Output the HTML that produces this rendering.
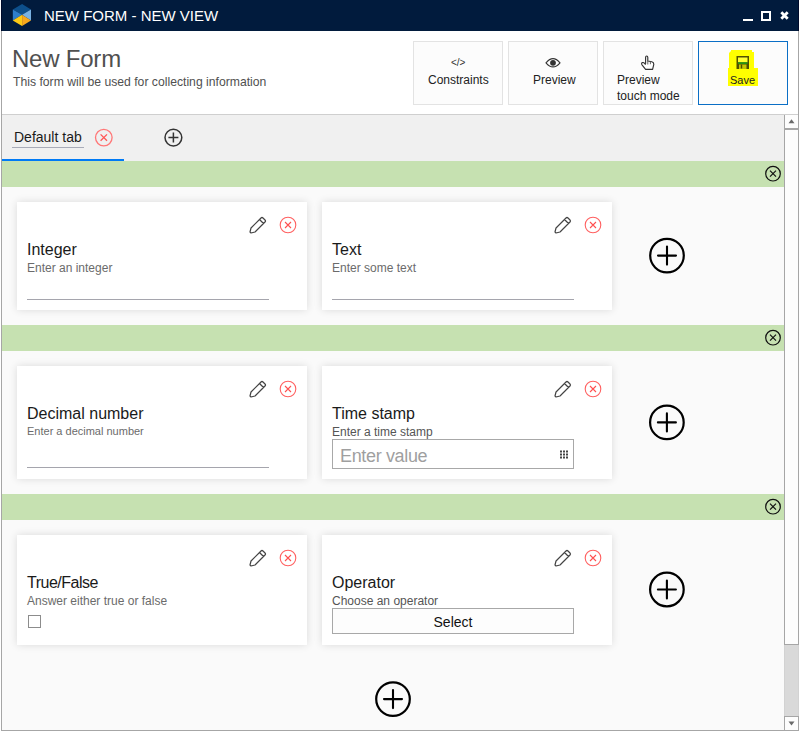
<!DOCTYPE html>
<html><head><meta charset="utf-8">
<style>
*{box-sizing:border-box;margin:0;padding:0}
html,body{width:800px;height:732px;overflow:hidden;background:#fff;font-family:"Liberation Sans",sans-serif}
.abs{position:absolute}
#title{left:1px;top:0;width:798px;height:31px;background:#011b3d;border-left:1px solid #000a2a;border-right:1px solid #000a2a}
#win{left:1px;top:31px;width:798px;height:700px;border:1px solid #a6a6a6;border-top:none;background:#fafafa}
#header{left:2px;top:31px;width:796px;height:83px;background:#fff}
#hline{left:2px;top:114px;width:796px;height:1px;background:#cfcfcf}
#tabs{left:2px;top:115px;width:782px;height:46px;background:#f0f0f0}
.band{left:2px;width:782px;height:26px;background:#c6e1b1}
.btn{top:41px;width:90px;height:64px;background:#fcfcfc;border:1px solid #e3e3e3}
.btxt{font-size:12px;color:#222;white-space:nowrap;line-height:16px}
.card{background:#fff;box-shadow:0 0 8px rgba(0,0,0,0.13)}
.t16{font-size:16px;color:#1a1a1a;white-space:nowrap;line-height:1}
.t11{font-size:12px;color:#6b6b6b;white-space:nowrap;line-height:1}
.uline{height:1px;background:#a5a5ad}
svg{position:absolute;overflow:visible}
</style></head><body>
<div id="title" class="abs"></div>
<!-- logo -->
<svg style="left:0;top:0" width="40" height="31">
  <polygon points="22.1,4 31,9.5 22.1,14.8 12.8,9.5" fill="#0d4f8b"/>
  <polygon points="12.8,9.5 22.1,14.8 12.8,20.6" fill="#2e7ecb"/>
  <polygon points="31,9.5 31,20.6 22.1,14.8" fill="#78b1e1"/>
  <polygon points="12.8,20.6 22.1,14.8 22.1,26" fill="#fcc914"/>
  <polygon points="22.1,14.8 31,20.6 22.1,26" fill="#f7a81c"/>
</svg>
<div class="abs" style="left:44px;top:7px;font-size:15px;color:#fff;white-space:nowrap;line-height:17px">NEW FORM - NEW VIEW</div>
<!-- window controls -->
<div class="abs" style="left:743px;top:19px;width:10px;height:2px;background:#fff"></div>
<div class="abs" style="left:761px;top:11px;width:10px;height:10px;border:2px solid #fff"></div>
<svg style="left:0;top:0" width="800" height="31">
  <path d="M781.3,12.3 L787.7,18.7 M787.7,12.3 L781.3,18.7" stroke="#fff" stroke-width="2.8" stroke-linecap="butt"/>
</svg>

<div id="win" class="abs"></div>
<div id="header" class="abs"></div>
<div id="hline" class="abs"></div>
<div class="abs" style="left:12px;top:46px;font-size:24px;letter-spacing:-0.22px;color:#505050;white-space:nowrap;line-height:26px">New Form</div>
<div class="abs" style="left:13px;top:75px;font-size:12.2px;color:#505050;white-space:nowrap;line-height:14px">This form will be used for collecting information</div>

<!-- buttons -->
<div class="abs btn" style="left:413px"></div>
<div class="abs btn" style="left:508px"></div>
<div class="abs btn" style="left:603px"></div>
<div class="abs btn" style="left:698px;border:1.5px solid #0b6fc6"></div>
<div class="abs" style="left:451px;top:57px;font-size:10px;color:#333;line-height:12px">&lt;/&gt;</div>
<div class="abs btxt" style="left:428px;top:72px">Constraints</div>
<svg style="left:0;top:0" width="800" height="120">
  <path d="M546,62.8 Q553,54.5 560,62.8 Q553,71 546,62.8 Z" fill="none" stroke="#333" stroke-width="1.1"/>
  <circle cx="553" cy="62.8" r="2.9" fill="#333"/>
</svg>
<div class="abs btxt" style="left:533px;top:72px">Preview</div>
<svg style="left:0;top:0" width="800" height="120">
  <path d="M645.6,63.8 L645.6,57.4 Q645.6,56 646.7,56 Q647.8,56 647.8,57.4 L647.8,61 L651.8,61.8 Q653.8,62.3 653.8,64.3 L652.6,69.3 L645.6,69.3 L642,64.8 Q641,63.3 642.4,62.6 Q643.6,62.2 644.6,63.4 L645.6,64.6" fill="#fff" stroke="#333" stroke-width="1.15" stroke-linejoin="round"/>
  <path d="M647.8,61 L647.8,64.5 M650.4,61.5 L650.4,64.2" stroke="#555" stroke-width="0.9"/>
</svg>
<div class="abs btxt" style="left:617px;top:72px">Preview<br>touch mode</div>
<!-- save highlight -->
<svg style="left:0;top:0" width="800" height="120">
  <path d="M731,50 L752,50 L752,52 L754,52 L754,68 L758,68 L758,86 L728,86 L728,68 L729,68 L729,53 L731,51 Z" fill="#ffff00"/>
  <rect x="736.5" y="56" width="12.5" height="13" fill="#505000"/>
  <rect x="738" y="57.5" width="9.5" height="4.8" fill="#ffff30"/>
  <rect x="738" y="62.3" width="9.5" height="1.6" fill="#1e9a14"/>
  <rect x="739" y="64.5" width="7.5" height="4.5" fill="#c4c400"/>
  <rect x="740.8" y="64.5" width="1.4" height="4" fill="#505000"/>
</svg>
<div class="abs btxt" style="left:730px;top:72px;font-size:11px">Save</div>

<!-- tabs -->
<div id="tabs" class="abs"></div>
<div class="abs" style="left:14px;top:130px;font-size:14px;color:#1a1a1a;white-space:nowrap;line-height:15px">Default tab</div>
<div class="abs" style="left:12px;top:147px;width:72px;height:1px;background:#a8abb8"></div>
<div class="abs" style="left:2px;top:159px;width:122px;height:2px;background:#007af5"></div>
<svg style="left:0;top:0" width="800" height="200">
  <circle cx="103.8" cy="137.6" r="8.3" fill="none" stroke="#f77" stroke-width="1.3"/>
  <path d="M100.6,134.4 L107,140.8 M107,134.4 L100.6,140.8" stroke="#f55" stroke-width="1.3"/>
  <circle cx="173.4" cy="137.6" r="8.4" fill="none" stroke="#333" stroke-width="1.5"/>
  <path d="M168.4,137.6 L178.4,137.6 M173.4,132.6 L173.4,142.6" stroke="#333" stroke-width="1.5"/>
</svg>

<!-- bands -->
<div class="abs band" style="top:161px"></div>
<div class="abs band" style="top:325px"></div>
<div class="abs band" style="top:494px"></div>
<svg style="left:0;top:0" width="800" height="732">
  <g fill="none" stroke="#111" stroke-width="1.2">
    <circle cx="773" cy="173.7" r="7.3"/><path d="M770,170.7 L776,176.7 M776,170.7 L770,176.7"/>
    <circle cx="773" cy="337.7" r="7.3"/><path d="M770,334.7 L776,340.7 M776,334.7 L770,340.7"/>
    <circle cx="773" cy="506.7" r="7.3"/><path d="M770,503.7 L776,509.7 M776,503.7 L770,509.7"/>
  </g>
</svg>

<!-- cards row 1 -->
<div class="abs card" style="left:17px;top:202px;width:290px;height:108px"></div>
<div class="abs card" style="left:322px;top:202px;width:290px;height:108px"></div>
<div class="abs t16" style="left:27px;top:242px">Integer</div>
<div class="abs t11" style="left:27px;top:262px">Enter an integer</div>
<div class="abs uline" style="left:27px;top:299px;width:242px"></div>
<div class="abs t16" style="left:332px;top:242px">Text</div>
<div class="abs t11" style="left:332px;top:262px">Enter some text</div>
<div class="abs uline" style="left:332px;top:299px;width:242px"></div>

<!-- cards row 2 -->
<div class="abs card" style="left:17px;top:366px;width:290px;height:113px"></div>
<div class="abs card" style="left:322px;top:366px;width:290px;height:113px"></div>
<div class="abs t16" style="left:27px;top:406px">Decimal number</div>
<div class="abs t11" style="left:27px;top:426px;font-size:11px">Enter a decimal number</div>
<div class="abs uline" style="left:27px;top:467px;width:242px"></div>
<div class="abs t16" style="left:332px;top:406px">Time stamp</div>
<div class="abs t11" style="left:332px;top:426px;font-size:12px;color:#555">Enter a time stamp</div>
<div class="abs" style="left:332px;top:439px;width:242px;height:30px;border:1px solid #a8a8a8;background:#fff"></div>
<div class="abs" style="left:340px;top:447px;font-size:18px;letter-spacing:-0.35px;color:#9f9f9f;white-space:nowrap;line-height:19px">Enter value</div>
<svg style="left:0;top:0" width="800" height="732">
  <g fill="#444">
    <rect x="560" y="450.5" width="2" height="2"/><rect x="563" y="450.5" width="2" height="2"/><rect x="566" y="450.5" width="2" height="2"/>
    <rect x="560" y="453.5" width="2" height="2"/><rect x="563" y="453.5" width="2" height="2"/><rect x="566" y="453.5" width="2" height="2"/>
    <rect x="560" y="456.5" width="2" height="2"/><rect x="563" y="456.5" width="2" height="2"/><rect x="566" y="456.5" width="2" height="2"/>
  </g>
</svg>

<!-- cards row 3 -->
<div class="abs card" style="left:17px;top:535px;width:290px;height:110px"></div>
<div class="abs card" style="left:322px;top:535px;width:290px;height:110px"></div>
<div class="abs t16" style="left:27px;top:575px;letter-spacing:-0.5px">True/False</div>
<div class="abs t11" style="left:27px;top:595px">Answer either true or false</div>
<div class="abs" style="left:28px;top:615px;width:13px;height:13px;border:1px solid #8c8c8c;background:#fff"></div>
<div class="abs t16" style="left:332px;top:575px">Operator</div>
<div class="abs t11" style="left:332px;top:595px;font-size:12px;color:#555">Choose an operator</div>
<div class="abs" style="left:332px;top:608px;width:242px;height:26px;border:1px solid #a8a8a8;background:#fdfdfd"></div>
<div class="abs" style="left:0;top:614px;width:906px;text-align:center;font-size:14px;color:#111;line-height:16px;white-space:nowrap">Select</div>

<!-- card icons -->
<svg style="left:0;top:0" width="800" height="732">
  
  <g transform="translate(250,217)"><path d="M0,15 L1,11 L11,1 Q12,0 13,1 L15,3 Q16,4 15,5 L5,15 L1,16 Z M9.5,2.5 L13.5,6.5" fill="none" stroke="#444" stroke-width="1.2" stroke-linejoin="round"/></g><g transform="translate(288,225)"><circle cx="0" cy="0" r="7.8" fill="none" stroke="#ff6060" stroke-width="1.1"/><path d="M-3,-3 L3,3 M3,-3 L-3,3" stroke="#ff5050" stroke-width="1.1"/></g>
  <g transform="translate(555,217)"><path d="M0,15 L1,11 L11,1 Q12,0 13,1 L15,3 Q16,4 15,5 L5,15 L1,16 Z M9.5,2.5 L13.5,6.5" fill="none" stroke="#444" stroke-width="1.2" stroke-linejoin="round"/></g><g transform="translate(593,225)"><circle cx="0" cy="0" r="7.8" fill="none" stroke="#ff6060" stroke-width="1.1"/><path d="M-3,-3 L3,3 M3,-3 L-3,3" stroke="#ff5050" stroke-width="1.1"/></g>
  <g transform="translate(250,381)"><path d="M0,15 L1,11 L11,1 Q12,0 13,1 L15,3 Q16,4 15,5 L5,15 L1,16 Z M9.5,2.5 L13.5,6.5" fill="none" stroke="#444" stroke-width="1.2" stroke-linejoin="round"/></g><g transform="translate(288,389)"><circle cx="0" cy="0" r="7.8" fill="none" stroke="#ff6060" stroke-width="1.1"/><path d="M-3,-3 L3,3 M3,-3 L-3,3" stroke="#ff5050" stroke-width="1.1"/></g>
  <g transform="translate(555,381)"><path d="M0,15 L1,11 L11,1 Q12,0 13,1 L15,3 Q16,4 15,5 L5,15 L1,16 Z M9.5,2.5 L13.5,6.5" fill="none" stroke="#444" stroke-width="1.2" stroke-linejoin="round"/></g><g transform="translate(593,389)"><circle cx="0" cy="0" r="7.8" fill="none" stroke="#ff6060" stroke-width="1.1"/><path d="M-3,-3 L3,3 M3,-3 L-3,3" stroke="#ff5050" stroke-width="1.1"/></g>
  <g transform="translate(250,550)"><path d="M0,15 L1,11 L11,1 Q12,0 13,1 L15,3 Q16,4 15,5 L5,15 L1,16 Z M9.5,2.5 L13.5,6.5" fill="none" stroke="#444" stroke-width="1.2" stroke-linejoin="round"/></g><g transform="translate(288,558)"><circle cx="0" cy="0" r="7.8" fill="none" stroke="#ff6060" stroke-width="1.1"/><path d="M-3,-3 L3,3 M3,-3 L-3,3" stroke="#ff5050" stroke-width="1.1"/></g>
  <g transform="translate(555,550)"><path d="M0,15 L1,11 L11,1 Q12,0 13,1 L15,3 Q16,4 15,5 L5,15 L1,16 Z M9.5,2.5 L13.5,6.5" fill="none" stroke="#444" stroke-width="1.2" stroke-linejoin="round"/></g><g transform="translate(593,558)"><circle cx="0" cy="0" r="7.8" fill="none" stroke="#ff6060" stroke-width="1.1"/><path d="M-3,-3 L3,3 M3,-3 L-3,3" stroke="#ff5050" stroke-width="1.1"/></g>
  <g transform="translate(667,255.6)"><circle cx="0" cy="0" r="16.8" fill="none" stroke="#000" stroke-width="2.2"/><path d="M-9,0 L9,0 M0,-9 L0,9" stroke="#000" stroke-width="2.1" stroke-linecap="round"/></g>
  <g transform="translate(666.9,422.4)"><circle cx="0" cy="0" r="16.8" fill="none" stroke="#000" stroke-width="2.2"/><path d="M-9,0 L9,0 M0,-9 L0,9" stroke="#000" stroke-width="2.1" stroke-linecap="round"/></g>
  <g transform="translate(666.9,589.5)"><circle cx="0" cy="0" r="16.8" fill="none" stroke="#000" stroke-width="2.2"/><path d="M-9,0 L9,0 M0,-9 L0,9" stroke="#000" stroke-width="2.1" stroke-linecap="round"/></g>
  <g transform="translate(393,699.1)"><circle cx="0" cy="0" r="16.8" fill="none" stroke="#000" stroke-width="2.2"/><path d="M-9,0 L9,0 M0,-9 L0,9" stroke="#000" stroke-width="2.1" stroke-linecap="round"/></g>
</svg>

<!-- window border -->
<div class="abs" style="left:1px;top:31px;width:1px;height:700px;background:#a6a6a6"></div>
<div class="abs" style="left:798px;top:31px;width:1px;height:700px;background:#a6a6a6"></div>
<div class="abs" style="left:1px;top:730px;width:798px;height:1px;background:#a6a6a6"></div>
<!-- scrollbar -->
<div class="abs" style="left:784px;top:130px;width:15px;height:587px;background:#d9d9d9;border-left:1px solid #d2d2d2;border-right:1px solid #d2d2d2"></div>
<div class="abs" style="left:784px;top:115px;width:15px;height:15px;background:#fdfdfd;border:1px solid #a6a6a6;border-top:none;border-bottom:2px solid #a6a6a6"></div>
<div class="abs" style="left:784px;top:130px;width:15px;height:515px;background:#fdfdfd;border:1px solid #a6a6a6;border-top:none"></div>
<div class="abs" style="left:784px;top:716px;width:15px;height:15px;background:#fdfdfd;border:1px solid #a6a6a6"></div>
<svg style="left:0;top:0" width="800" height="732">
  <path d="M788.5,123.2 L794.5,123.2 L791.5,119.2 Z" fill="#6a6a6a"/>
  <path d="M788.5,721.5 L794.5,721.5 L791.5,725.5 Z" fill="#6a6a6a"/>
</svg>
</body></html>
